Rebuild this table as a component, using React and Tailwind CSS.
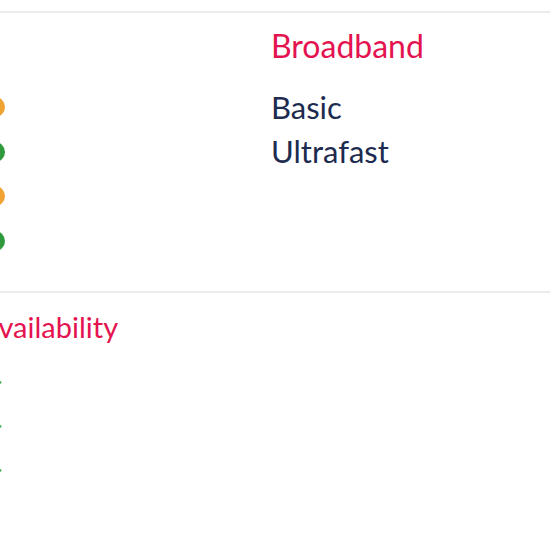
const rows = [
  { color: "bg-[#f0a233]", label: "Basic" },
  { color: "bg-[#2f9a3c]", label: "Ultrafast" },
  { color: "bg-[#f0a233]", label: null },
  { color: "bg-[#2f9a3c]", label: null },
];

export default function App() {
  return (
    <div
      className="w-[550px] h-[550px] overflow-hidden bg-white"
      style={{ fontFamily: "Lato, 'Open Sans', sans-serif" }}
    >
      <div className="pt-[11px]">
        <div className="h-[2px] bg-[#ebebeb]" />

        <div className="flex h-[278px]">
          <div className="w-[271px] pt-[84px] flex flex-col gap-[24.6px] shrink-0">
            {rows.map((r, i) => (
              <span
                key={i}
                className={`block w-[20px] h-[20px] rounded-full ml-[-15px] ${r.color}`}
              />
            ))}
          </div>
          <div className="pt-[13px]">
            <h2 className="text-[32px] leading-[40px] text-[#e4134f]">
              Broadband
            </h2>
            <ul className="mt-[19px] text-[31px] leading-[44px] text-[#1c2b4f]">
              {rows
                .filter((r) => r.label)
                .map((r) => (
                  <li key={r.label}>{r.label}</li>
                ))}
            </ul>
          </div>
        </div>

        <div className="h-[2px] bg-[#ebebeb]" />

        <div className="ml-[-20px] pt-[14px]">
          <h2 className="text-[29px] leading-[40px] text-[#e4134f]">
            Availability
          </h2>
          <div className="mt-[33px] flex flex-col gap-[34px] ml-[10px]">
            {[0, 1, 2].map((i) => (
              <span key={i} className="block w-[12px] h-[10px] text-[#4fae55]">
                <svg viewBox="0 0 12 10" className="w-[12px] h-[10px]">
                  <path
                    d="M1 5l3.5 3.5L11 1.5"
                    fill="none"
                    stroke="currentColor"
                    strokeWidth="2.4"
                  />
                </svg>
              </span>
            ))}
          </div>
        </div>
      </div>
    </div>
  );
}
